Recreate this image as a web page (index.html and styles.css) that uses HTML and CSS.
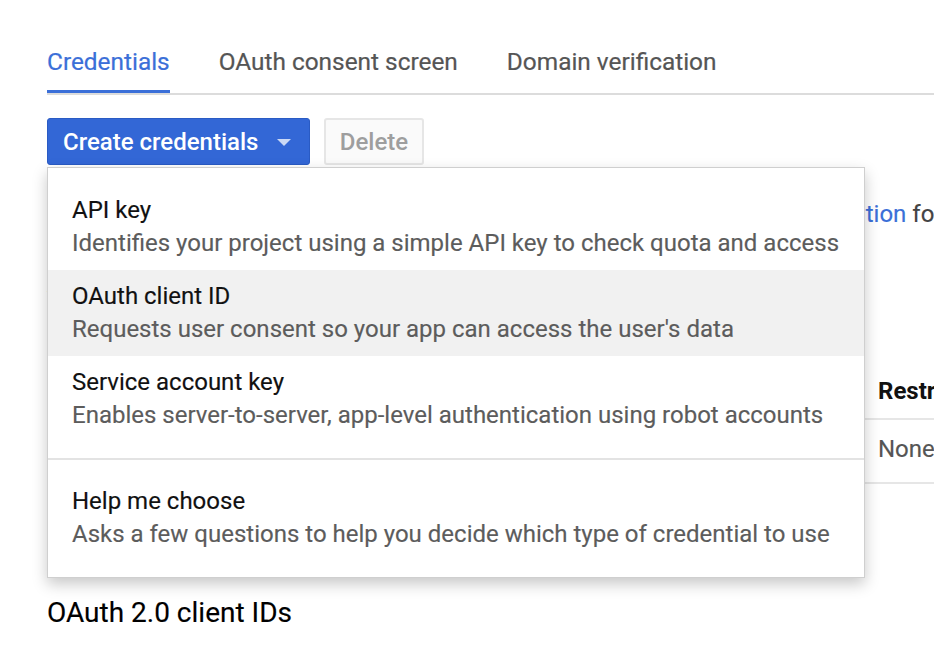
FILE: index.html
```html
<!DOCTYPE html>
<html lang="en">
<head>
<meta charset="utf-8">
<title>Credentials</title>
<link rel="stylesheet" href="styles.css">
</head>
<body>
<div class="page">
  <nav class="tabs">
    <a class="tab active">Credentials</a>
    <a class="tab">OAuth consent screen</a>
    <a class="tab">Domain verification</a>
  </nav>

  <div class="toolbar">
    <div class="dropdown">
      <button class="btn primary">Create credentials <span class="caret"></span></button>
      <div class="menu">
        <div class="item">
          <div class="item-title">API key</div>
          <div class="item-desc">Identifies your project using a simple API key to check quota and access</div>
        </div>
        <div class="item hover">
          <div class="item-title">OAuth client ID</div>
          <div class="item-desc">Requests user consent so your app can access the user's data</div>
        </div>
        <div class="item">
          <div class="item-title">Service account key</div>
          <div class="item-desc">Enables server-to-server, app-level authentication using robot accounts</div>
        </div>
        <div class="sep"></div>
        <div class="item">
          <div class="item-title">Help me choose</div>
          <div class="item-desc">Asks a few questions to help you decide which type of credential to use</div>
        </div>
      </div>
    </div>
    <button class="btn disabled">Delete</button>
  </div>

  <p class="intro">Create credentials to access your enabled APIs. Refer to the <a class="link">API documentation</a> for details.</p>

  <h2 class="section">API keys</h2>
  <div class="table">
    <div class="row head">
      <div class="cell c1"></div>
      <div class="cell c2">Name</div>
      <div class="cell c3">Creation date</div>
      <div class="cell c4">Restrictions</div>
      <div class="cell c5">Key</div>
    </div>
    <div class="row">
      <div class="cell c1"></div>
      <div class="cell c2">API key 1</div>
      <div class="cell c3">Aug 2, 2017</div>
      <div class="cell c4 muted">None</div>
      <div class="cell c5">AIza...</div>
    </div>
  </div>

  <h2 class="section oauth">OAuth 2.0 client IDs</h2>
</div>
</body>
</html>
```

FILE: styles.css
```css
html, body {
  margin: 0;
  padding: 0;
  background: #fff;
  overflow: hidden;
}
body {
  font-family: Roboto, "Liberation Sans", sans-serif;
  color: #212121;
  width: 934px;
  height: 647px;
}
.page {
  padding-left: 47px;
  width: 1400px;
}
.tabs {
  display: flex;
  gap: 49px;
  padding-top: 47px;
  border-bottom: 2px solid #dcdcdc;
}
.tab {
  font-size: 24.4px;
  line-height: 30px;
  color: #555;
  padding-bottom: 13px;
  border-bottom: 3px solid transparent;
  -webkit-text-stroke: 0.2px currentColor;
}
.tab.active {
  color: #3b6fd8;
  border-bottom-color: #3b6fd8;
}
.toolbar {
  display: flex;
  gap: 14px;
  margin-top: 23px;
  height: 47px;
}
.dropdown {
  position: relative;
}
.btn {
  font-family: Roboto, "Liberation Sans", sans-serif;
  height: 47px;
  border-radius: 3px;
  font-size: 24px;
  box-sizing: border-box;
  display: flex;
  align-items: center;
}
.btn.primary {
  background: #3367d6;
  color: #fff;
  border: 1px solid #2a5bc4;
  padding: 0 17px 0 15px;
  gap: 19px;
  font-weight: 500;
  width: 263px;
}
.caret {
  width: 0;
  height: 0;
  border-left: 7px solid transparent;
  border-right: 7px solid transparent;
  border-top: 7px solid rgba(255,255,255,0.75);
  margin-top: 2px;
}
.btn.disabled {
  background: #fafafa;
  color: #9e9e9e;
  border: 2px solid #e6e6e6;
  padding: 0 15px;
  width: 100px;
  justify-content: center;
  font-weight: 500;
}
.menu {
  position: absolute;
  top: 49px;
  left: 0;
  width: 818px;
  box-sizing: border-box;
  background: #fff;
  border: 1px solid #cfcfcf;
  box-shadow: 0 6px 14px rgba(0,0,0,0.22);
  padding: 16px 0 16px;
  z-index: 10;
}
.item {
  padding: 10px 24px;
  height: 86px;
  box-sizing: border-box;
}
.item.hover {
  background: #f1f1f1;
}
.item-title {
  font-size: 24px;
  line-height: 33px;
  color: #111;
  -webkit-text-stroke: 0.15px currentColor;
}
.item-desc {
  font-size: 24px;
  line-height: 33px;
  color: #5c5c5c;
  white-space: nowrap;
  -webkit-text-stroke: 0.15px currentColor;
}
.sep {
  height: 2px;
  background: #e3e3e3;
  margin: 16px 0 15px;
}
.intro {
  margin: 34px 0 0;
  padding-left: 12px;
  font-size: 24px;
  line-height: 30px;
  color: #444;
  white-space: nowrap;
  -webkit-text-stroke: 0.15px currentColor;
}
.link {
  color: #3b6fd8;
}
.section {
  margin: 40px 0 0;
  font-size: 25px;
  font-weight: 400;
  line-height: 30px;
  color: #111;
  -webkit-text-stroke: 0.15px currentColor;
}
.table {
  margin-top: 64px;
}
.row {
  display: grid;
  grid-template-columns: 60px 400px 371px 200px 200px;
  border-bottom: 2px solid #e6e6e6;
  height: 62px;
  align-items: center;
}
.row.head {
  height: 55px;
  font-weight: 700;
}
.row .cell.muted {
  margin-top: -5px;
}
.cell {
  font-size: 24px;
  white-space: nowrap;
  color: #111;
}
.cell.muted {
  color: #555;
  -webkit-text-stroke: 0.15px currentColor;
}
.section.oauth {
  margin-top: 114px;
  font-size: 28px;
  color: #000;
}
```
